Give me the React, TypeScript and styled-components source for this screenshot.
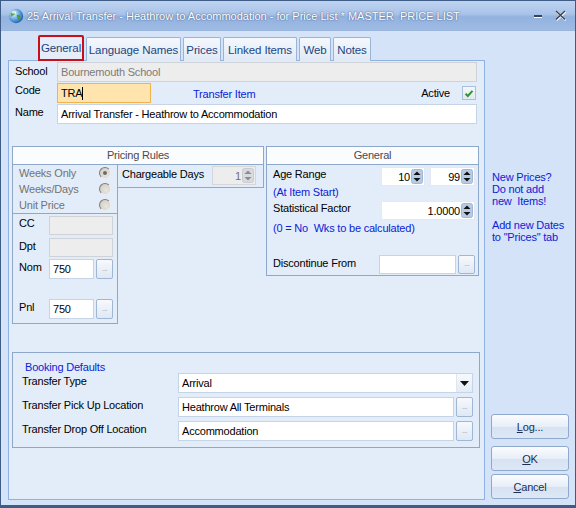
import React from 'react';
import styled, { createGlobalStyle } from 'styled-components';

const GlobalStyle = createGlobalStyle`
  html, body {
    margin: 0;
    padding: 0;
    background: #d4e3f7;
  }
  body {
    font-family: 'Liberation Sans', Arial, sans-serif;
    font-size: 11px;
    letter-spacing: -0.2px;
    color: #000;
  }
  * {
    box-sizing: border-box;
  }
`;

type Tone = 'plain' | 'disabled' | 'focus';

const Window = styled.div`
  width: 576px;
  height: 508px;
  display: flex;
  flex-direction: column;
  background: #d4e3f7;
  border: 1px solid #3d5c86;
  border-bottom-width: 3px;
  overflow: hidden;
`;

const TitleBar = styled.div`
  height: 30px;
  flex: none;
  display: flex;
  align-items: center;
  padding: 0 8px 0 7px;
  background: linear-gradient(#bed3f0 0%, #a9c3e9 45%, #93b2df 55%, #9fbbe4 100%);
  border-bottom: 1px solid #9cb7de;
`;

const TitleText = styled.div`
  flex: 1;
  margin-left: 3px;
  font-size: 11px;
  letter-spacing: 0;
  color: #fff;
  white-space: pre;
  text-shadow: 0 0 2px #4a6a99, 0 0 1px #4a6a99;
`;

const CaptionButtons = styled.div`
  display: flex;
  align-items: center;
  gap: 12px;
`;

const Body = styled.div`
  flex: 1;
  display: flex;
  padding: 5px 0 5px 7px;
  min-height: 0;
`;

const MainCol = styled.div`
  width: 477px;
  flex: none;
  display: flex;
  flex-direction: column;
`;

const TabStrip = styled.div`
  height: 25px;
  display: flex;
  align-items: flex-end;
  gap: 2px;
  padding-left: 30px;
  position: relative;
  z-index: 1;
  margin-bottom: -1px;
`;

const Tab = styled.div<{ $active?: boolean; $w: number }>`
  width: ${(p) => p.$w}px;
  height: ${(p) => (p.$active ? 26 : 24)}px;
  display: flex;
  align-items: center;
  justify-content: center;
  white-space: nowrap;
  font-size: 11.5px;
  letter-spacing: -0.1px;
  color: #23457f;
  border: ${(p) => (p.$active ? '2px solid #c8101a' : '1px solid #9ab4d8')};
  border-bottom: ${(p) => (p.$active ? '2px solid #c8101a' : 'none')};
  border-radius: 2px 2px 0 0;
  background: ${(p) =>
    p.$active ? '#e4edf9' : 'linear-gradient(#f5f8fd, #dfe9f6)'};
`;

const Panel = styled.div`
  flex: 1;
  display: flex;
  flex-direction: column;
  border: 1px solid #8db2e3;
  background: #e3edf9;
  padding: 1px 5px 0 3px;
`;

const TopForm = styled.div`
  display: grid;
  grid-template-columns: 42px 1fr;
  row-gap: 1px;
  padding: 0 2px 0 3px;
`;

const Label = styled.div<{ $top?: number }>`
  line-height: 14px;
  padding-top: ${(p) => p.$top ?? 0}px;
  white-space: pre;
`;

const Row = styled.div`
  display: flex;
  align-items: center;
`;

const Field = styled.div<{ $tone?: Tone; $w?: number; $h?: number; $right?: boolean }>`
  height: ${(p) => p.$h ?? 20}px;
  width: ${(p) => (p.$w ? `${p.$w}px` : 'auto')};
  flex: ${(p) => (p.$w ? 'none' : '1')};
  display: flex;
  align-items: center;
  justify-content: ${(p) => (p.$right ? 'flex-end' : 'flex-start')};
  padding: 0 3px 0 3px;
  white-space: nowrap;
  overflow: hidden;
  border: 1px solid
    ${(p) => (p.$tone === 'disabled' ? '#cfd3d8' : p.$tone === 'focus' ? '#f0b44f' : '#c5d4e7')};
  background: ${(p) =>
    p.$tone === 'disabled' ? '#ededed' : p.$tone === 'focus' ? '#ffe4ad' : '#ffffff'};
  color: ${(p) => (p.$tone === 'disabled' ? '#7b7b7b' : '#000')};
`;

const Caret = styled.span`
  display: inline-block;
  width: 1px;
  height: 13px;
  background: #000;
`;

const LinkText = styled.div`
  color: #0b22d8;
  line-height: 12px;
  white-space: pre;
`;

const CodeHint = styled(LinkText)`
  margin-left: 42px;
  margin-top: 1px;
`;

const ActiveLabel = styled.div`
  margin-left: auto;
  margin-right: 12px;
`;

const CheckBox = styled.div`
  width: 14px;
  height: 14px;
  border: 1px solid #a9bfdc;
  background: linear-gradient(#f4f7fb, #e1e9f3);
  display: flex;
  align-items: center;
  justify-content: center;
  margin-right: 1px;
`;

const GroupsRow = styled.div`
  display: flex;
  gap: 2px;
  margin-top: 22px;
  align-items: flex-start;
`;

const PricingGroup = styled.div`
  width: 252px;
  display: grid;
  grid-template-columns: 106px 1fr;
  align-items: start;
`;

const GroupHeader = styled.div`
  grid-column: 1 / -1;
  height: 19px;
  border: 1px solid #8ea8cb;
  background: #fbfcfe;
  color: #4a4a4a;
  text-align: center;
  line-height: 16px;
`;

const LeftCol = styled.div`
  border: 1px solid #8ea8cb;
  border-top: none;
`;

const RadioRow = styled.div`
  height: 16px;
  display: flex;
  align-items: center;
  justify-content: space-between;
  padding: 0 6px 0 6px;
  color: #737373;
`;

const Radio = styled.div<{ $on?: boolean }>`
  width: 12px;
  height: 12px;
  border-radius: 50%;
  background: radial-gradient(circle at 60% 60%, #e8e6e0 0%, #d6d2ca 70%);
  border: 1px solid;
  border-color: #7d7d7d #ececec #ececec #7d7d7d;
  display: flex;
  align-items: center;
  justify-content: center;
  &::after {
    content: '';
    width: 4px;
    height: 4px;
    border-radius: 50%;
    background: ${(p) => (p.$on ? '#6b6b6b' : 'transparent')};
  }
`;

const AccountBox = styled.div`
  border-top: 1px solid #8ea8cb;
  padding: 2px 3px 4px 6px;
  display: flex;
  flex-direction: column;
`;

const AccountRow = styled.div<{ $top?: number }>`
  display: grid;
  grid-template-columns: 28px auto auto;
  justify-content: start;
  column-gap: 2px;
  margin-top: ${(p) => p.$top ?? 0}px;
`;

const ChargeBox = styled.div`
  border: 1px solid #8ea8cb;
  border-left: none;
  border-top: none;
  height: 23px;
  display: flex;
  align-items: flex-start;
  justify-content: space-between;
  padding: 1px 7px 0 4px;
`;

const GeneralGroup = styled.div`
  width: 213px;
  display: flex;
  flex-direction: column;
`;

const GeneralBody = styled.div`
  height: 111px;
  border: 1px solid #8ea8cb;
  border-top: none;
  padding: 2px 3px 0 6px;
  display: flex;
  flex-direction: column;
`;

const GenRow = styled.div<{ $top?: number }>`
  display: flex;
  align-items: flex-start;
  gap: 5px;
  margin-top: ${(p) => p.$top ?? 0}px;
`;

const GenNote = styled(LinkText)<{ $top?: number }>`
  margin-top: ${(p) => p.$top ?? 0}px;
`;

const GenLabel = styled(Label)`
  flex: 1;
`;

const SpinBox = styled.div<{ $w: number; $tone?: Tone }>`
  width: ${(p) => p.$w}px;
  height: 19px;
  display: flex;
  align-items: center;
  justify-content: flex-end;
  gap: 1px;
  padding: 0 1px 0 3px;
  border: 1px solid ${(p) => (p.$tone === 'disabled' ? '#d3d6da' : '#e2e9f2')};
  background: ${(p) => (p.$tone === 'disabled' ? '#ededed' : '#ffffff')};
  color: ${(p) => (p.$tone === 'disabled' ? '#6f6f6f' : '#000')};
`;

const EllipsisButton = styled.div<{ $h?: number }>`
  width: 17px;
  height: ${(p) => p.$h ?? 20}px;
  flex: none;
  border: 1px solid #9fb6d5;
  border-radius: 2px;
  background: linear-gradient(#f7f9fd, #dfe8f4);
  color: #8ba2c2;
  font-size: 8px;
  display: flex;
  align-items: flex-end;
  justify-content: center;
  padding-bottom: 5px;
  letter-spacing: -0.5px;
`;

const BookingBox = styled.div`
  margin-top: 28px;
  width: 468px;
  border: 1px solid #8ea8cb;
  padding: 8px 6px 6px 9px;
  display: flex;
  flex-direction: column;
`;

const BookingTitle = styled(LinkText)`
  margin-left: 3px;
`;

const BookingRow = styled.div<{ $top?: number }>`
  display: grid;
  grid-template-columns: 154px 1fr auto;
  column-gap: 2px;
  margin-top: ${(p) => p.$top ?? 0}px;
`;

const Combo = styled(Field)`
  padding-right: 0;
  justify-content: space-between;
`;

const ComboArrow = styled.div`
  width: 16px;
  height: 18px;
  display: flex;
  align-items: center;
  justify-content: center;
  border-left: 1px solid #dfe6ef;
  background: linear-gradient(#f7f9fc, #e4ebf4);
`;

const SideCol = styled.div`
  flex: 1;
  display: flex;
  flex-direction: column;
  padding: 0 6px 1px 6px;
`;

const Notes = styled.div`
  margin-top: 135px;
  margin-left: 1px;
  display: flex;
  flex-direction: column;
  gap: 12px;
`;

const Buttons = styled.div`
  margin-top: auto;
  display: flex;
  flex-direction: column;
`;

const ActionButton = styled.div<{ $top?: number }>`
  height: 25px;
  margin-top: ${(p) => p.$top ?? 0}px;
  border: 1px solid #8fa9cd;
  border-radius: 3px;
  background: linear-gradient(#fbfcfe 0%, #e7eef8 50%, #d6e2f2 51%, #dde8f6 100%);
  color: #1b2f52;
  display: flex;
  align-items: center;
  justify-content: center;
  u {
    text-decoration: underline;
  }
`;

function Globe() {
  return (
    <svg width="16" height="16" viewBox="0 0 16 16">
      <defs>
        <radialGradient id="g" cx="0.35" cy="0.35" r="0.7">
          <stop offset="0" stopColor="#e9f6ff" />
          <stop offset="0.6" stopColor="#5aa0dc" />
          <stop offset="1" stopColor="#1f5fa8" />
        </radialGradient>
      </defs>
      <circle cx="8" cy="8" r="7.2" fill="url(#g)" />
      <path d="M3 5 C5 3 7 4 7 6 C6 8 4 7 3.5 9 C2.5 8 2.5 6 3 5Z" fill="#5aa646" />
      <path d="M9 7 C11 6 13 8 12.5 10 C11.5 12.5 9.5 12 9.5 10 C9 9 8.5 8 9 7Z" fill="#4f9a3e" />
      <ellipse cx="6" cy="4.5" rx="2.5" ry="1.2" fill="#ffffff" opacity="0.7" />
    </svg>
  );
}

function Minimize() {
  return (
    <svg width="9" height="6" viewBox="0 0 9 6">
      <rect x="0" y="2" width="8" height="2" fill="#3b4350" />
      <rect x="0" y="4" width="8" height="1" fill="#ffffff" />
    </svg>
  );
}

function Close() {
  return (
    <svg width="12" height="11" viewBox="0 0 12 11">
      <path d="M1 1 L10 9.5 M10 1 L1 9.5" stroke="#ffffff" strokeWidth="1.6" transform="translate(0.6 0.8)" />
      <path d="M1 1 L10 9.5 M10 1 L1 9.5" stroke="#3b4350" strokeWidth="1.4" />
    </svg>
  );
}

function Tick() {
  return (
    <svg width="10" height="9" viewBox="0 0 10 9">
      <path d="M1.5 4.8 L3.8 7 L8.5 1.8" fill="none" stroke="#2b9a2e" strokeWidth="2" />
    </svg>
  );
}

function SpinArrows({ dim }: { dim?: boolean }) {
  const fg = dim ? '#8c8c8c' : '#111';
  return (
    <svg width="12" height="15" viewBox="0 0 12 15">
      <rect x="0.5" y="0.5" width="11" height="14" rx="2" fill={dim ? '#d6dbe1' : '#b8cbe4'} stroke={dim ? '#c8cdd3' : '#9fb6d6'} />
      <path d="M2.5 6 L6 2.5 L9.5 6Z" fill={fg} />
      <path d="M2.5 9 L6 12.5 L9.5 9Z" fill={fg} />
    </svg>
  );
}

function DownArrow() {
  return (
    <svg width="9" height="5" viewBox="0 0 9 5">
      <path d="M0 0 L9 0 L4.5 5Z" fill="#111" />
    </svg>
  );
}

const tabs = [
  { label: 'General', w: 46 },
  { label: 'Language Names', w: 95 },
  { label: 'Prices', w: 38 },
  { label: 'Linked Items', w: 74 },
  { label: 'Web', w: 32 },
  { label: 'Notes', w: 38 },
];

export default function App() {
  return (
    <>
      <GlobalStyle />
      <Window>
        <TitleBar>
          <Globe />
          <TitleText>25 Arrival Transfer - Heathrow to Accommodation - for Price List * MASTER  PRICE LIST</TitleText>
          <CaptionButtons>
            <Minimize />
            <Close />
          </CaptionButtons>
        </TitleBar>

        <Body>
          <MainCol>
            <TabStrip>
              {tabs.map((t, i) => (
                <Tab key={t.label} $w={t.w} $active={i === 0}>
                  {t.label}
                </Tab>
              ))}
            </TabStrip>

            <Panel>
              <TopForm>
                <Label $top={2}>School</Label>
                <Field $tone="disabled">Bournemouth School</Field>
                <Label $top={0}>Code</Label>
                <Row>
                  <Field $tone="focus" $w={94}>
                    TRA
                    <Caret />
                  </Field>
                  <CodeHint>Transfer Item</CodeHint>
                  <ActiveLabel>Active</ActiveLabel>
                  <CheckBox>
                    <Tick />
                  </CheckBox>
                </Row>
                <Label $top={1}>Name</Label>
                <Field>Arrival Transfer - Heathrow to Accommodation</Field>
              </TopForm>

              <GroupsRow>
                <PricingGroup>
                  <GroupHeader>Pricing Rules</GroupHeader>
                  <LeftCol>
                    <RadioRow>
                      Weeks Only
                      <Radio $on />
                    </RadioRow>
                    <RadioRow>
                      Weeks/Days
                      <Radio />
                    </RadioRow>
                    <RadioRow>
                      Unit Price
                      <Radio />
                    </RadioRow>
                    <AccountBox>
                      <AccountRow>
                        <Label $top={0}>CC</Label>
                        <Field $tone="disabled" $w={64} $h={19} />
                      </AccountRow>
                      <AccountRow $top={3}>
                        <Label $top={1}>Dpt</Label>
                        <Field $tone="disabled" $w={64} $h={19} />
                      </AccountRow>
                      <AccountRow $top={2}>
                        <Label $top={1}>Nom</Label>
                        <Field $w={45}>750</Field>
                        <EllipsisButton>...</EllipsisButton>
                      </AccountRow>
                      <AccountRow $top={20}>
                        <Label $top={1}>Pnl</Label>
                        <Field $w={45}>750</Field>
                        <EllipsisButton>...</EllipsisButton>
                      </AccountRow>
                    </AccountBox>
                  </LeftCol>
                  <ChargeBox>
                    <Label $top={1}>Chargeable Days</Label>
                    <SpinBox $w={44} $tone="disabled">
                      1
                      <SpinArrows dim />
                    </SpinBox>
                  </ChargeBox>
                </PricingGroup>

                <GeneralGroup>
                  <GroupHeader>General</GroupHeader>
                  <GeneralBody>
                    <GenRow>
                      <GenLabel>Age Range</GenLabel>
                      <SpinBox $w={44}>
                        10
                        <SpinArrows />
                      </SpinBox>
                      <SpinBox $w={45}>
                        99
                        <SpinArrows />
                      </SpinBox>
                    </GenRow>
                    <GenNote $top={0}>(At Item Start)</GenNote>
                    <GenRow $top={3}>
                      <GenLabel>Statistical Factor</GenLabel>
                      <SpinBox $w={94}>
                        1.0000
                        <SpinArrows />
                      </SpinBox>
                    </GenRow>
                    <GenNote $top={2}>(0 = No  Wks to be calculated)</GenNote>
                    <GenRow $top={21}>
                      <GenLabel $top={1}>Discontinue From</GenLabel>
                      <Row style={{ gap: 2 }}>
                        <Field $w={77} $h={19} />
                        <EllipsisButton $h={19}>...</EllipsisButton>
                      </Row>
                    </GenRow>
                  </GeneralBody>
                </GeneralGroup>
              </GroupsRow>

              <BookingBox>
                <BookingTitle>Booking Defaults</BookingTitle>
                <BookingRow>
                  <Label $top={1}>Transfer Type</Label>
                  <Combo style={{ gridColumn: '2 / 4' }}>
                    Arrival
                    <ComboArrow>
                      <DownArrow />
                    </ComboArrow>
                  </Combo>
                </BookingRow>
                <BookingRow $top={4}>
                  <Label $top={1}>Transfer Pick Up Location</Label>
                  <Field>Heathrow All Terminals</Field>
                  <EllipsisButton>...</EllipsisButton>
                </BookingRow>
                <BookingRow $top={4}>
                  <Label $top={1}>Transfer Drop Off Location</Label>
                  <Field>Accommodation</Field>
                  <EllipsisButton>...</EllipsisButton>
                </BookingRow>
              </BookingBox>
            </Panel>
          </MainCol>

          <SideCol>
            <Notes>
              <LinkText>{'New Prices?\nDo not add\nnew  Items!'}</LinkText>
              <LinkText>{'Add new Dates\nto "Prices" tab'}</LinkText>
            </Notes>
            <Buttons>
              <ActionButton>
                <span>
                  <u>L</u>og...
                </span>
              </ActionButton>
              <ActionButton $top={7}>
                <span>
                  <u>O</u>K
                </span>
              </ActionButton>
              <ActionButton $top={3}>
                <span>
                  <u>C</u>ancel
                </span>
              </ActionButton>
            </Buttons>
          </SideCol>
        </Body>
      </Window>
    </>
  );
}
